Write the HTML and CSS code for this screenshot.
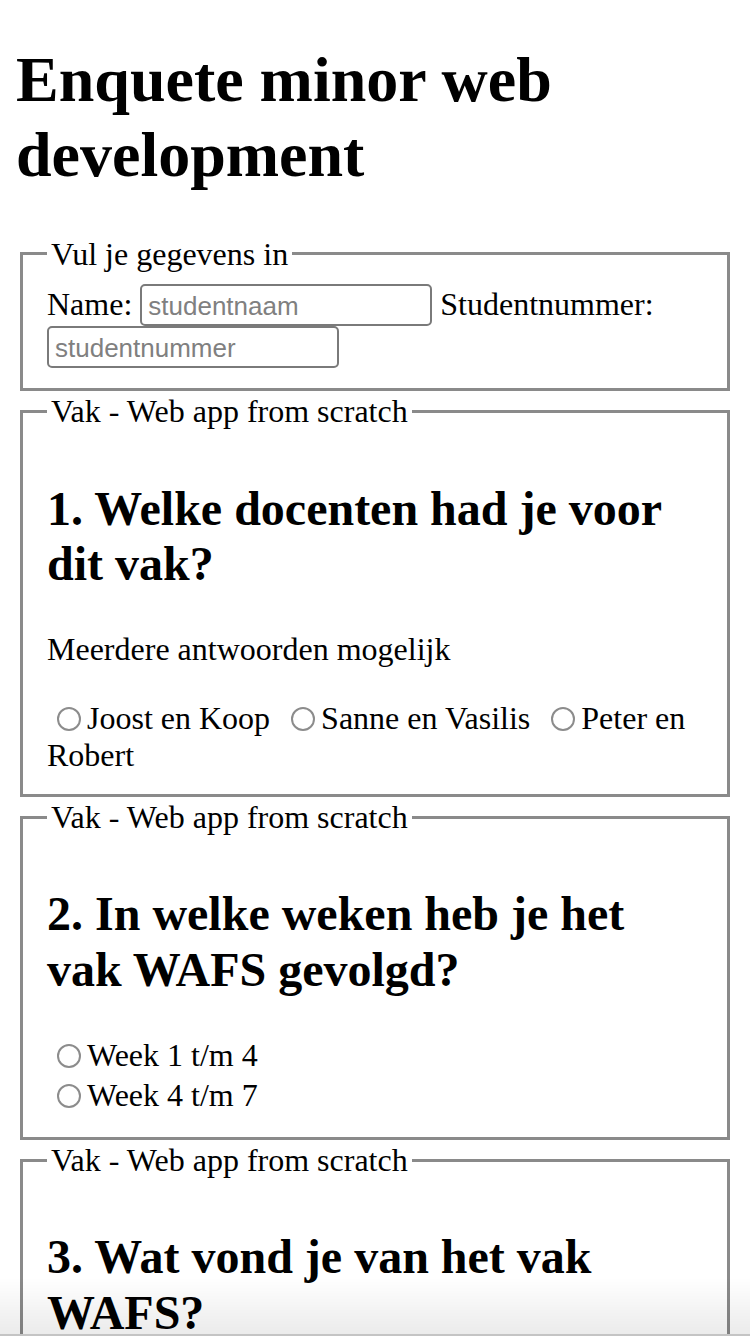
FILE: index.html
```html
<!DOCTYPE html>
<html lang="nl">
<head>
<meta charset="utf-8">
<title>Enquete minor web development</title>
<link rel="stylesheet" href="styles.css">
</head>
<body>
<h1 class="title">Enquete minor web development</h1>
<form class="survey">
  <fieldset class="group">
    <legend class="group-legend">Vul je gegevens in</legend>
    <label class="field">Name: <input class="text-input" type="text" placeholder="studentnaam"></label>
    <label class="field">Studentnummer: <input class="text-input short" type="text" placeholder="studentnummer"></label>
  </fieldset>
  <fieldset class="group">
    <legend class="group-legend">Vak - Web app from scratch</legend>
    <h2 class="question">1. Welke docenten had je voor dit vak?</h2>
    <p class="hint">Meerdere antwoorden mogelijk</p>
    <div class="options-inline">
      <label class="option"><input class="radio" type="radio" name="docent">Joost en Koop</label>
      <label class="option"><input class="radio" type="radio" name="docent">Sanne en Vasilis</label>
      <label class="option"><input class="radio" type="radio" name="docent">Peter en Robert</label>
    </div>
  </fieldset>
  <fieldset class="group">
    <legend class="group-legend">Vak - Web app from scratch</legend>
    <h2 class="question">2. In welke weken heb je het vak WAFS gevolgd?</h2>
    <div class="options-stack">
      <label class="option-row"><input class="radio" type="radio" name="weken">Week 1 t/m 4</label>
      <label class="option-row"><input class="radio" type="radio" name="weken">Week 4 t/m 7</label>
    </div>
  </fieldset>
  <fieldset class="group">
    <legend class="group-legend">Vak - Web app from scratch</legend>
    <h2 class="question">3. Wat vond je van het vak WAFS?</h2>
    <p class="hint">Geef een cijfer</p>
  </fieldset>
</form>
<div class="bottom-fade"></div>
</body>
</html>
```
FILE: styles.css
```css
html, body {
  background: #ffffff;
}
body {
  margin: 16px;
  font-family: "Liberation Serif", "Times New Roman", serif;
  font-size: 32px;
  color: #000;
}
.title {
  font-size: 64px;
  font-weight: bold;
  margin: 27px 0 42px;
  line-height: 1.17;
}
.survey {
  margin: 0;
}
.group {
  margin: 0 4px 1px;
  padding: 11.2px 24px 20px;
  border: 3px solid #8a8a8a;
  min-width: 0;
}
.group-legend {
  padding: 0 4px;
  line-height: 1.2;
}
.field {
  line-height: 1.15;
}
.text-input {
  box-sizing: border-box;
  width: 292px;
  height: 42px;
  border: 2px solid #7a7a7a;
  border-radius: 5px;
  padding: 2px 6px 0;
  font-family: "Liberation Sans", Arial, sans-serif;
  font-size: 26px;
  color: #000;
  background: #fff;
  vertical-align: baseline;
  margin: 0;
}
.text-input::placeholder {
  color: #808080;
}
.question {
  font-size: 48px;
  font-weight: bold;
  margin: 39px 0 40px;
  line-height: 1.15;
}
.hint {
  margin: 32px 0;
}
.options-inline {
  line-height: 1.15;
}
.option {
  margin-right: 3px;
}
.options-stack {
  display: flex;
  flex-direction: column;
}
.option-row {
  height: 40px;
  display: block;
}
.radio {
  -webkit-appearance: none;
  appearance: none;
  box-sizing: border-box;
  width: 24px;
  height: 24px;
  margin: 6px 6px 0 10px;
  border: 2px solid #8c8c8c;
  border-radius: 50%;
  background: #fff;
  vertical-align: -2px;
}
.bottom-fade {
  position: fixed;
  left: 0;
  right: 0;
  bottom: 0;
  height: 56px;
  background: linear-gradient(to bottom, rgba(0,0,0,0), rgba(0,0,0,0.08));
  border-bottom: 2px solid #c4c4c4;
  pointer-events: none;
}
```
